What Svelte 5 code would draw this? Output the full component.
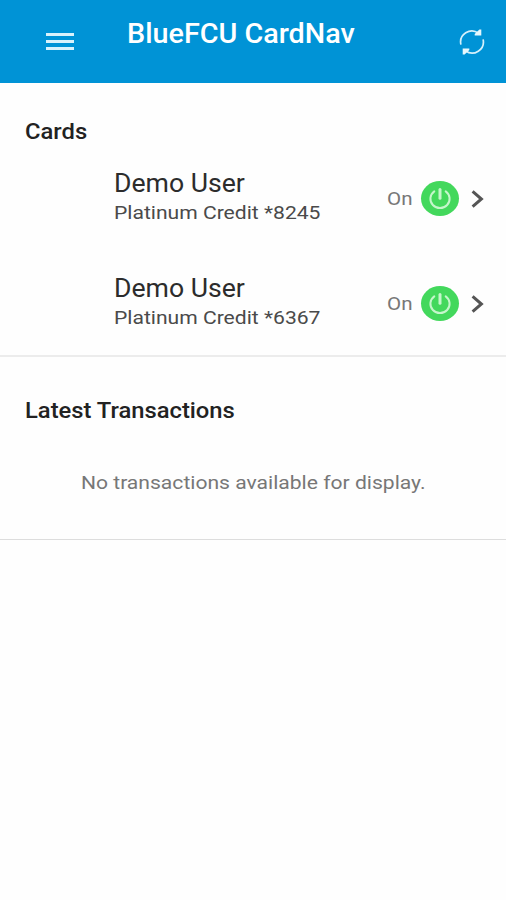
<script>
  let cards = [
    { name: "Demo User", type: "Platinum Credit", last4: "8245", on: true },
    { name: "Demo User", type: "Platinum Credit", last4: "6367", on: true },
  ];
  let transactions = [];

  function toggle(card) {
    card.on = !card.on;
    cards = cards;
  }
</script>

<div class="app">
  <header>
    <button class="menu" aria-label="Menu">
      <span></span>
      <span></span>
      <span></span>
    </button>
    <h1>BlueFCU CardNav</h1>
    <button class="refresh" aria-label="Refresh">
      <svg width="26" height="26" viewBox="0 0 26 26">
        <path d="M1.9 15.6A11.2 11.2 0 0 1 19.5 4.2M24.1 10.4A11.2 11.2 0 0 1 6.5 21.8" />
        <path class="head" d="M20.4 .4h1.9v6.2h-6.6v-1.6zM5.6 25.6h-1.9v-6.2h6.6v1.6z" />
      </svg>
    </button>
  </header>

  <section class="cards">
    <h2>Cards</h2>
    {#each cards as card}
      <div class="card">
        <div class="info">
          <span class="name">{card.name}</span>
          <span class="type">{card.type} *{card.last4}</span>
        </div>
        <span class="status">{card.on ? "On" : "Off"}</span>
        <button class="power" class:off={!card.on} aria-label="Toggle card" on:click={() => toggle(card)}>
          <svg width="24" height="24" viewBox="0 0 24 24">
            <path d="M6.3 4.4A9.6 9.2 0 1 0 17.7 4.4" />
            <path class="bar" d="M12 2.6v8.6" />
          </svg>
        </button>
        <svg class="chevron" width="13" height="18" viewBox="0 0 13 18">
          <path d="M1.6 1.4L10.4 9l-8.8 7.6" />
        </svg>
      </div>
    {/each}
  </section>

  <section class="latest">
    <h2>Latest Transactions</h2>
    {#each transactions as transaction}
      <p>{transaction.name}</p>
    {:else}
      <p class="empty">No transactions available for display.</p>
    {/each}
  </section>
</div>

<style>
  :global(body) {
    background: #fefefe;
  }

  .app {
    min-height: 900px;
    font-family: Roboto, sans-serif;
    color: #222;
  }

  button {
    padding: 0;
    border: 0;
    background: none;
  }

  svg {
    display: block;
    fill: none;
  }

  /* slightly extended lettering */
  h1, h2, .name, .type {
    width: fit-content;
    transform: scaleX(1.08);
    transform-origin: 0 50%;
  }

  header {
    display: flex;
    align-items: center;
    box-sizing: border-box;
    height: 83px;
    padding: 0 21px 0 46px;
    background: #0093d6;
  }

  .menu {
    display: flex;
    flex-direction: column;
    gap: 4px;
    width: 28px;
  }

  .menu span {
    height: 3px;
    background: #d9f2fc;
  }

  h1 {
    margin: 0 auto 16px 53px;
    font-size: 27px;
    font-weight: 500;
    line-height: 32px;
    transform: scaleX(1.065);
    color: #fff;
  }

  .refresh path {
    stroke: #d5f0fb;
    stroke-width: 1.7;
  }

  .refresh .head {
    fill: #e6f7fd;
    stroke: none;
  }

  h2 {
    margin: 0 0 0 25px;
    font-size: 22px;
    font-weight: 500;
    line-height: 26px;
  }

  .cards {
    box-sizing: border-box;
    height: 274px;
    padding-top: 36px;
    border-bottom: 2px solid #ececec;
  }

  .card {
    display: flex;
    align-items: center;
    height: 105px;
    padding: 0 22px 0 114px;
  }

  .cards h2 {
    margin-bottom: 1px;
  }

  .info {
    flex: 1;
    display: flex;
    flex-direction: column;
    margin-bottom: 2px;
  }

  .name {
    font-size: 25px;
    line-height: 30px;
    transform: scaleX(1.065);
    color: #2c2c2c;
  }

  .type {
    font-size: 19px;
    line-height: 28px;
    transform: scaleX(1.11);
    color: #4a4a4a;
  }

  .status {
    margin-right: 8px;
    font-size: 19px;
    transform: scaleX(1.08);
    transform-origin: 100% 50%;
    color: #777;
  }

  .power {
    display: flex;
    align-items: center;
    justify-content: center;
    width: 38px;
    height: 35px;
    margin-right: 12px;
    border-radius: 50%;
    background: #43d85c;
  }

  .power.off {
    background: #bbb;
  }

  .power path {
    stroke: #c5f6cb;
    stroke-width: 2;
    stroke-linecap: round;
  }

  .power .bar {
    stroke-width: 3;
  }

  .chevron path {
    stroke: #555;
    stroke-width: 3;
  }

  .latest {
    box-sizing: border-box;
    height: 183px;
    padding-top: 41px;
    border-bottom: 1px solid #ddd;
  }

  .empty {
    width: fit-content;
    margin: 47px auto 0;
    font-size: 19px;
    line-height: 24px;
    transform: scaleX(1.11);
    color: #777;
  }
</style>
